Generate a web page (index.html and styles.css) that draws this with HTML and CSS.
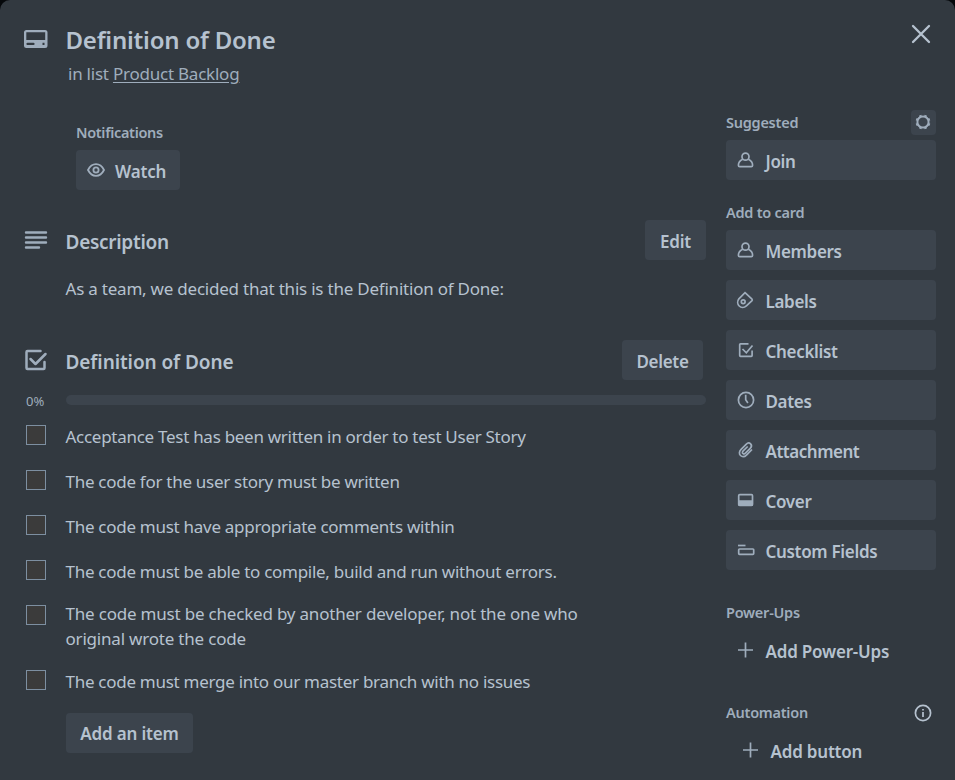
FILE: index.html
```
<!DOCTYPE html>
<html lang="en">
<head>
<meta charset="utf-8">
<title>Definition of Done</title>
<link rel="stylesheet" href="styles.css">
</head>
<body>
<div class="card">
  <header class="card-header">
    <svg class="icon-lg header-icon" viewBox="0 0 24 20"><path fill="currentColor" fill-rule="evenodd" d="M2.500 1h18.500a2.500 2.500 0 0 1 2.500 2.500v13a2.500 2.500 0 0 1-2.500 2.500H2.500a2.500 2.500 0 0 1-2.500-2.500v-13a2.500 2.500 0 0 1 2.500-2.500zM2.300 3.300v7.700h18.900V3.300zM3.500 13.800a1 1 0 0 0 0 2.200h6a1 1 0 0 0 0-2.200zM18.500 13.800v2.200h2v-2.200z"/></svg>
    <div class="heading">
      <h1 class="title">Definition of Done</h1>
      <p class="in-list">in list <a class="list-link">Product Backlog</a></p>
    </div>
    <svg class="close" viewBox="0 0 20 20"><path d="M2 2l16 16M18 2L2 18"/></svg>
  </header>
  <div class="columns">
    <main class="main">
      <section class="notifications">
        <h3 class="label tight">Notifications</h3>
        <button class="btn watch"><svg class="eye" viewBox="0 0 18 14"><path d="M1 7C3 3 5.500 1.200 9 1.200s6 1.800 8 5.800c-2 4-4.500 5.800-8 5.800S3 11 1 7z"/><circle cx="9" cy="7" r="2.600"/></svg><span>Watch</span></button>
      </section>
      <section class="description">
        <div class="section-head">
          <svg class="icon-lg lines" viewBox="0 0 24 20"><path d="M2 2.500h20M2 7.500h20M2 12.500h20M2 17.500h13"/></svg>
          <h2 class="section-title tight">Description</h2>
          <button class="btn edit">Edit</button>
        </div>
        <p class="body-text">As a team, we decided that this is the Definition of Done:</p>
      </section>
      <section class="checklist">
        <div class="section-head">
          <svg class="icon-lg check" viewBox="0 0 24 24"><path d="M16.500 3H3.500a1 1 0 0 0-1 1v16a1 1 0 0 0 1 1h16a1 1 0 0 0 1-1v-6M6.500 11l5 5L21.500 6"/></svg>
          <h2 class="section-title">Definition of Done</h2>
          <button class="btn delete">Delete</button>
        </div>
        <div class="progress"><span class="percent">0%</span><div class="track"></div></div>
        <ul class="items">
          <li class="item"><i class="box"></i><span class="text">Acceptance Test has been written in order to test User Story</span></li>
          <li class="item"><i class="box"></i><span class="text">The code for the user story must be written</span></li>
          <li class="item"><i class="box"></i><span class="text">The code must have appropriate comments within</span></li>
          <li class="item"><i class="box"></i><span class="text">The code must be able to compile, build and run without errors.</span></li>
          <li class="item double"><i class="box"></i><span class="text">The code must be checked by another developer, not the one who<br>original wrote the code</span></li>
          <li class="item"><i class="box"></i><span class="text">The code must merge into our master branch with no issues</span></li>
        </ul>
        <button class="btn add-item">Add an item</button>
      </section>
    </main>
    <aside class="side">
      <div class="side-head"><h3 class="label">Suggested</h3>
        <span class="gear"><svg viewBox="0 0 20 20"><circle cx="10" cy="10" r="5.600"/><path class="teeth" d="M15.200 12.200l1.600.7M12.200 15.200l.7 1.600M7.800 15.200l-.7 1.600M4.800 12.200l-1.600.7M4.800 7.800l-1.600-.7M7.800 4.800l-.7-1.600M12.200 4.800l.7-1.600M15.200 7.800l1.600-.7"/></svg></span></div>
      <button class="side-btn"><svg class="ic" viewBox="0 0 20 20"><circle cx="9.500" cy="6.700" r="3.500"/><path d="M6.700 9.200C4.200 10.300 2.400 12.500 2.400 15.300q0 1.400 1.300 1.400h11.600q1.300 0 1.300-1.400C16.600 12.500 14.800 10.300 12.300 9.200"/></svg><span>Join</span></button>
      <h3 class="label group">Add to card</h3>
      <button class="side-btn"><svg class="ic" viewBox="0 0 20 20"><circle cx="9.500" cy="6.700" r="3.500"/><path d="M6.700 9.200C4.200 10.300 2.400 12.500 2.400 15.300q0 1.400 1.300 1.400h11.600q1.300 0 1.300-1.400C16.600 12.500 14.800 10.300 12.300 9.200"/></svg><span>Members</span></button>
      <button class="side-btn"><svg class="ic" viewBox="0 0 20 20"><path d="M9 2.600L16 9.200q.6.700 0 1.400l-5.600 5.200c-2.200 2-5.300 2-7.200.2s-2-4.900-.3-7.200z"/><circle cx="7.200" cy="11.800" r="1.900"/></svg><span>Labels</span></button>
      <button class="side-btn"><svg class="ic" viewBox="0 0 20 20"><path d="M12.500 3.800H4.500q-.8 0-.8.8v11q0 .8.8.8h10.800q.8 0 .8-.8V10.500M6.500 9l3.800 3.800 6.200-7.300"/></svg><span>Checklist</span></button>
      <button class="side-btn"><svg class="ic" viewBox="0 0 20 20"><circle cx="10" cy="10" r="7.600"/><path d="M9.700 4.800v5l2.200 3.200"/></svg><span>Dates</span></button>
      <button class="side-btn"><svg class="ic" viewBox="0 0 20 20"><path d="M16 9.500l-5.300 5.300c-2 2-4.600 2.200-6.200.7s-1.400-4.200.6-6.200l5-5c1.500-1.500 3.300-1.600 4.500-.4s1 3-.4 4.500l-4.800 4.800c-.9.900-2 .9-2.600.3s-.5-1.700.4-2.600L11.700 6.500"/></svg><span class="narrow">Attachment</span></button>
      <button class="side-btn"><svg class="ic" viewBox="0 0 20 20"><rect x="2.700" y="4.700" width="13.800" height="10.600" rx="1"/><path d="M3 11h13.200v4H3z" fill="currentColor"/></svg><span>Cover</span></button>
      <button class="side-btn"><svg class="ic" viewBox="0 0 20 20"><path d="M2 5.500h7.500"/><rect x="2.700" y="9" width="15" height="5.300" rx=".8"/></svg><span>Custom Fields</span></button>
      <h3 class="label group power">Power-Ups</h3>
      <button class="side-btn plain"><svg class="ic" viewBox="0 0 20 20"><path d="M9.500 2.500v15M2 10h15"/></svg><span>Add Power-Ups</span></button>
      <div class="side-head automation"><h3 class="label">Automation</h3><svg class="info" viewBox="0 0 20 20"><circle cx="10" cy="10" r="7.600"/><path d="M10 9v5M10 6v1.600"/></svg></div>
      <button class="side-btn plain"><svg class="ic indent" viewBox="0 0 20 20"><path d="M9.500 2.500v15M2 10h15"/></svg><span>Add button</span></button>
    </aside>
  </div>
</div>
</body>
</html>
```
FILE: styles.css
```
* { box-sizing: border-box; }
body { margin: 0; background: #05080b; font-family: "Noto Sans", sans-serif; color: #b6c2cf; }
h1, h2, h3, p, ul { margin: 0; padding: 0; }
button { font: inherit; color: inherit; border: 0; }
svg { fill: none; stroke: currentColor; flex: none; }
.card { width: 955px; height: 780px; background: #323940; border-radius: 10px 10px 0 0; overflow: hidden; }
.card-header { display: flex; height: 110px; padding: 24px 24px 0 24px; }
.icon-lg { width: 24px; height: 24px; color: #9fadbc; }
.header-icon { height: 20px; margin-top: 5px; stroke: none; }
.heading { margin-left: 17.500px; flex: 1; }
.title { font-size: 24px; line-height: 32px; font-weight: 600; letter-spacing: -0.220px; }
.in-list { font-size: 17px; line-height: 24px; margin: 6px 0 0 2.500px; color: #9fadbc; letter-spacing: -0.230px; }
.list-link { text-decoration: underline; text-underline-offset: 2px; }
.close { width: 20px; height: 20px; stroke-width: 2.300; stroke-linecap: round; }
.columns { display: flex; }
.main { width: 706px; padding-left: 24px; }
.label { font-size: 14.500px; line-height: 20px; font-weight: 600; color: #9fadbc; letter-spacing: -0.250px; }
.label.tight { letter-spacing: -0.320px; }
.notifications { margin: 12px 0 0 52px; }
.btn { height: 40px; border-radius: 4px; background: #3c444d; font-size: 17px; font-weight: 600; line-height: 38px; padding: 0 15px; text-align: center; white-space: nowrap; letter-spacing: -0.160px; }
.watch { display: flex; align-items: center; width: 104px; margin-top: 8px; padding: 2px 0 0 11px; }
.watch span { padding-top: 1px; }
.eye { width: 18px; height: 14px; stroke-width: 1.800; margin: -2px 10px 0 0; color: #9fadbc; }
.section-head { display: flex; height: 40px; }
.description { margin-top: 30px; height: 120px; }
.lines { height: 20px; margin-top: 10px; stroke-width: 2.400; stroke-linecap: round; }
.check { margin-top: 8px; stroke-width: 2.500; stroke-linecap: round; stroke-linejoin: round; }
.section-title { font-size: 19px; line-height: 28px; font-weight: 600; margin: 8px 0 0 17.500px; flex: 1; letter-spacing: -0.080px; }
.section-title.tight { letter-spacing: -0.280px; }
.edit { width: 61px; padding: 3px 0 0; line-height: 37px; padding-top: 3px; }
.delete { width: 81px; margin-right: 3px; padding: 3px 0 0; line-height: 37px; letter-spacing: -0.300px; }
.body-text { font-size: 17px; line-height: 24px; margin: 17px 0 0 41.500px; white-space: nowrap; letter-spacing: -0.220px; }
.progress { display: flex; align-items: center; height: 20px; margin-top: 10px; }
.percent { width: 42px; padding: 2px 0 0 2px; font-size: 13px; line-height: 18px; color: #9fadbc; }
.track { flex: 1; height: 10px; border-radius: 5px; background: #3c444d; }
.items { list-style: none; margin-top: 3px; }
.item { display: flex; height: 45px; padding-top: 12px; }
.double { height: 65px; }
.box { width: 20px; height: 20px; margin: 0 19.500px 0 2px; border: 1px solid #7d8fa1; background: #3b3b3b; flex: none; }
.text { font-size: 17px; line-height: 25px; white-space: nowrap; letter-spacing: -0.280px; margin-top: -1px; }
.double .text { margin-top: -4px; letter-spacing: -0.200px; }
.add-item { display: block; width: 127px; margin: 10px 0 0 42px; padding: 1px 0 0; }
.side { width: 210px; margin-left: 20px; }
.side-head { display: flex; justify-content: space-between; height: 30px; padding-top: 2px; }
.gear { width: 25px; height: 25px; margin-top: -2px; border-radius: 4px; background: #3c444d; padding: 2px; }
.gear svg { width: 20px; height: 20px; display: block; stroke-width: 2; color: #9fadbc; }
.gear .teeth { stroke-width: 2.500; }
.side-btn { display: flex; align-items: center; width: 210px; height: 40px; margin-bottom: 10px; border-radius: 4px; background: #3c444d; font-size: 17px; font-weight: 600; padding: 2px 0 0 10px; white-space: nowrap; letter-spacing: -0.320px; }
.narrow { letter-spacing: -0.480px; }
.ic { width: 20px; height: 20px; margin: -2px 9.500px 0 0; stroke-width: 1.700; color: #9fadbc; }
.group { height: 30px; margin-top: 22px; margin-bottom: -2px; }
.power { margin-top: 32px; }
.plain { background: none; letter-spacing: -0.200px; }
.indent { margin-left: 5px; }
.automation { margin-top: 30px; }
.info { width: 20px; height: 20px; stroke-width: 1.700; margin: 1px 3px 0 0; }
```
